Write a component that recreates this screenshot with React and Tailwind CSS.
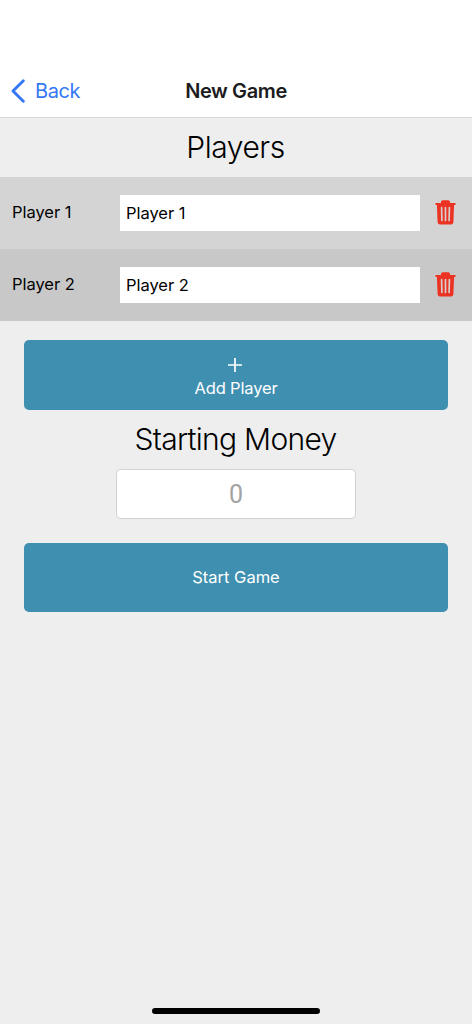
import React, { useState } from "react";

const initPlayers = [
  { id: 1, name: "Player 1" },
  { id: 2, name: "Player 2" },
];

const TrashIcon = () => (
  <svg width="21" height="25" viewBox="0 0 21 25" fill="none">
    <path
      fill="#ec3323"
      d="M0.3 4.100c0-.6.300-1 .8-1H6V2c0-1.100.7-1.800 1.800-1.800h5.400C14.300.2 15 .9 15 2v1.100h4.900c.5 0 .8.400.8 1s-.3 1-.8 1h-.8l-.7 17c-.1 1.500-1 2.400-2.400 2.400H5c-1.400 0-2.300-.9-2.400-2.400l-.7-17h-.8c-.5 0-.8-.4-.8-1z"
    />
    <path
      stroke="#d8cccb"
      strokeWidth="1.700"
      strokeLinecap="round"
      d="M6.600 7.700l.3 12.800M10.500 7.700v12.800M14.400 7.700l-.3 12.800"
    />
  </svg>
);

const Header = () => (
  <header className="relative flex h-[118px] items-end border-b border-[#d8d8d8] bg-white">
    <button className="flex h-[52px] items-center pl-[11px] text-[#3478f6]">
      <svg width="14" height="24" viewBox="0 0 14 24" fill="none">
        <path
          d="M12.300 1.700L2 12l10.300 10.300"
          stroke="currentColor"
          strokeWidth="2.900"
          strokeLinecap="round"
          strokeLinejoin="round"
        />
      </svg>
      <span className="ml-[10px] text-[20px] tracking-[-0.400px]">Back</span>
    </button>
    <h1 className="absolute inset-x-0 bottom-0 flex h-[52px] items-center justify-center text-[20px] font-semibold tracking-[-0.400px] text-[#1c1c1e] pointer-events-none">
      New Game
    </h1>
  </header>
);

const PlayerRow = ({ player, handleChange, handleDelete }) => (
  <div className="flex h-[72px] items-center pl-3 odd:bg-[#d4d4d4] even:bg-[#c8c8c8]">
    <span className="w-[108px] pb-0.5 text-[16.500px] tracking-[-0.050px]">Player {player.id}</span>
    <input
      className="h-9 w-[300px] bg-white px-1.5 text-[16.500px] tracking-[-0.050px] outline-none"
      value={player.name}
      onChange={(e) => handleChange(player.id, e.target.value)}
    />
    <button className="ml-[15px] pb-0.5" onClick={() => handleDelete(player.id)}>
      <TrashIcon />
    </button>
  </div>
);

export default function App() {
  const [players, setPlayers] = useState(initPlayers);
  const [money, setMoney] = useState("");

  const handleChange = (id, name) => {
    setPlayers((prev) => prev.map((p) => (p.id === id ? { ...p, name } : p)));
  };

  const handleDelete = (id) => {
    setPlayers((prev) => prev.filter((p) => p.id !== id));
  };

  const handleAdd = () => {
    const id = players.length + 1;
    setPlayers([...players, { id, name: `Player ${id}` }]);
  };

  return (
    <div className="flex min-h-screen w-full flex-col bg-[#eeeeee] font-['Inter',sans-serif] text-black">
      <Header />
      <h2 className="flex h-[59px] items-center justify-center pr-px text-[30px] font-light tracking-[-0.450px]">
        Players
      </h2>
      <div>
        {players.map((player) => (
          <PlayerRow
            key={player.id}
            player={player}
            handleChange={handleChange}
            handleDelete={handleDelete}
          />
        ))}
      </div>

      <button
        onClick={handleAdd}
        className="mx-6 mt-[19px] flex h-[70px] flex-col items-center rounded-[5px] bg-[#3f8fb0] pt-[18px] text-white"
      >
        <svg width="14" height="14" viewBox="0 0 14 14" className="-ml-0.5">
          <path d="M7 0v14M0 7h14" stroke="currentColor" strokeWidth="1.700" />
        </svg>
        <span className="mt-1 text-[16.500px] leading-[24px] tracking-[-0.150px]">Add Player</span>
      </button>

      <h2 className="flex h-[59px] items-center justify-center pr-px text-[30px] font-light tracking-[-0.700px]">
        Starting Money
      </h2>
      <input
        className="h-[50px] w-[240px] self-center rounded-[5px] border border-[#d3d3d3] bg-white text-center font-['Roboto',sans-serif] text-[25px] outline-none placeholder:text-[#a3a3a3]"
        placeholder="0"
        value={money}
        onChange={(e) => setMoney(e.target.value)}
      />
      <button className="mx-6 mt-6 h-[69px] rounded-[5px] bg-[#3f8fb0] text-[16.500px] text-white">
        Start Game
      </button>

      <div className="mx-auto mt-auto mb-[10px] h-1.5 w-[168px] rounded-full bg-black" />
    </div>
  );
}
